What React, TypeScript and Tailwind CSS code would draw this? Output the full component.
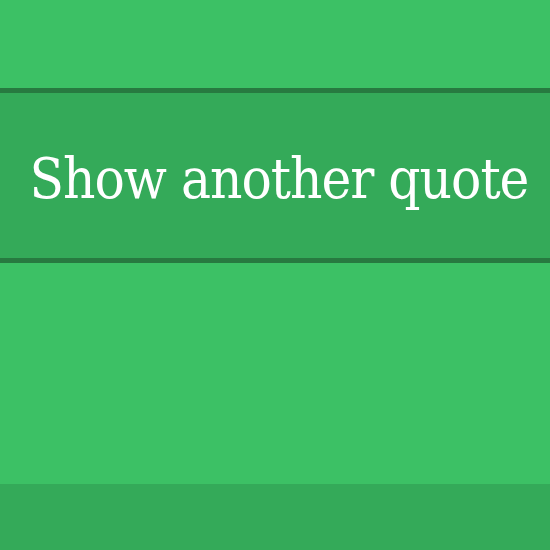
export default function App() {
  return (
    <div className="flex h-[550px] w-[550px] flex-col bg-[#3cc165]">
      <div className="h-[88px]" />
      <button className="flex h-[175px] w-full items-center justify-center border-y-[5px] border-[#277a40] bg-[#34aa59] pl-[8px] pt-[6px] font-['DejaVu_Serif_Condensed','DejaVu_Serif',serif] text-[56px] leading-none tracking-[-1px] text-white">
        Show another quote
      </button>
      <div className="flex-1" />
      <div className="h-[66px] bg-[#34aa59]" />
    </div>
  );
}
